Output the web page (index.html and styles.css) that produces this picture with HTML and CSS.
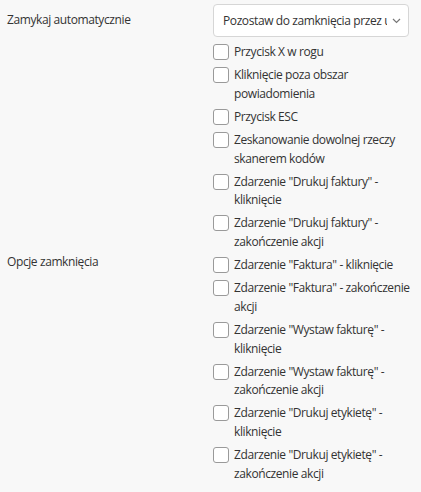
FILE: index.html
```html
<!DOCTYPE html>
<html lang="pl">
<head>
<meta charset="utf-8">
<link rel="stylesheet" href="styles.css">
</head>
<body>
<div class="form">
  <div class="row">
    <div class="label">Zamykaj automatycznie</div>
    <div class="control">
      <div class="select">
        <span class="select-text">Pozostaw do zamknięcia przez użytkownika</span>
        <svg class="chev" width="9" height="6" viewBox="0 0 9 6"><path d="M1 1l3.5 3.5L8 1" fill="none" stroke="#777" stroke-width="1.2"/></svg>
      </div>
    </div>
  </div>
  <div class="row row-center">
    <div class="label">Opcje zamknięcia</div>
    <div class="control">
      <ul class="checks">
        <li><span class="box"></span><span class="txt">Przycisk X w rogu</span></li>
        <li><span class="box"></span><span class="txt">Kliknięcie poza obszar powiadomienia</span></li>
        <li><span class="box"></span><span class="txt">Przycisk ESC</span></li>
        <li><span class="box"></span><span class="txt">Zeskanowanie dowolnej rzeczy skanerem kodów</span></li>
        <li><span class="box"></span><span class="txt">Zdarzenie "Drukuj faktury" - kliknięcie</span></li>
        <li><span class="box"></span><span class="txt">Zdarzenie "Drukuj faktury" - zakończenie akcji</span></li>
        <li><span class="box"></span><span class="txt">Zdarzenie "Faktura" - kliknięcie</span></li>
        <li><span class="box"></span><span class="txt">Zdarzenie "Faktura" - zakończenie akcji</span></li>
        <li><span class="box"></span><span class="txt">Zdarzenie "Wystaw fakturę" - kliknięcie</span></li>
        <li><span class="box"></span><span class="txt">Zdarzenie "Wystaw fakturę" - zakończenie akcji</span></li>
        <li><span class="box"></span><span class="txt">Zdarzenie "Drukuj etykietę" - kliknięcie</span></li>
        <li><span class="box"></span><span class="txt">Zdarzenie "Drukuj etykietę" - zakończenie akcji</span></li>
      </ul>
    </div>
  </div>
</div>
</body>
</html>
```
FILE: styles.css
```css
html, body {
  margin: 0;
  padding: 0;
  background: #f8f8f8;
}
body {
  font-family: "Open Sans", "Liberation Sans", sans-serif;
  font-size: 12px;
  letter-spacing: -0.4px;
  color: #333;
}
.form {
  padding-top: 4px;
}
.row {
  display: grid;
  grid-template-columns: 213px 1fr;
}
.row-center {
  align-items: center;
}
.row > .label {
  padding-left: 7px;
}
.row:first-child > .label {
  padding-top: 7px;
}
.select {
  box-sizing: border-box;
  width: 196px;
  height: 33px;
  background: #fff;
  border: 1px solid #d6d6d6;
  border-radius: 4px;
  display: flex;
  align-items: center;
  padding: 0 7px 0 9px;
  gap: 5px;
}
.select-text {
  flex: 1;
  overflow: hidden;
  white-space: nowrap;
}
.chev {
  flex: none;
}
.checks {
  list-style: none;
  margin: 4px 0 0;
  padding: 0 3px 0 0;
}
.checks li {
  display: flex;
  align-items: flex-start;
  padding: 2.125px 0;
  line-height: 18.75px;
}
.box {
  flex: none;
  box-sizing: border-box;
  width: 16px;
  height: 16px;
  margin-top: 1px;
  border: 1px solid #9a9a9a;
  border-radius: 3px;
  background: #fff;
  margin-right: 5px;
}
.txt {
  flex: 1;
}
```
